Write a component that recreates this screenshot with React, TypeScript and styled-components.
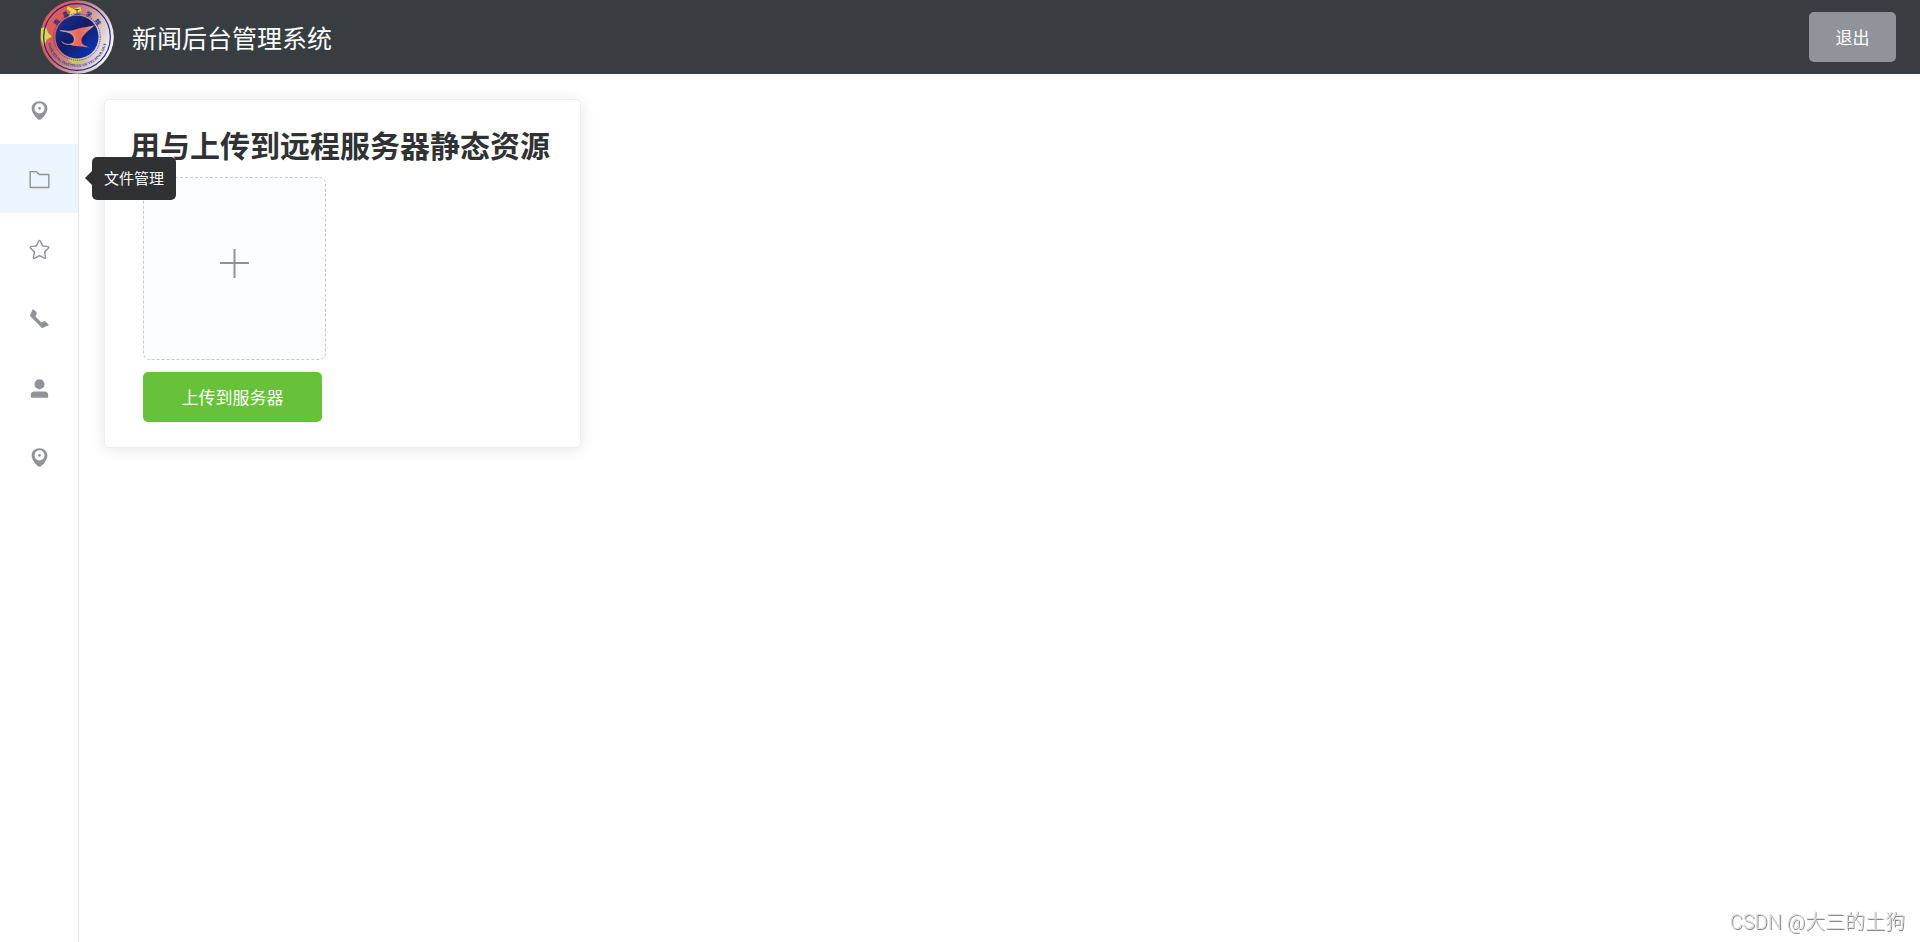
import React from "react";
import styled, { createGlobalStyle } from "styled-components";

const GlobalStyle = createGlobalStyle`
  * { box-sizing: border-box; }
  body {
    margin: 0;
    background: #fff;
    color: #303133;
    font-family: "Noto Sans CJK SC", "Microsoft YaHei", sans-serif;
  }
`;

const Page = styled.div`
  display: flex;
  flex-direction: column;
  min-height: 100vh;
`;

const Header = styled.header`
  display: flex;
  align-items: center;
  justify-content: space-between;
  height: 74px;
  padding: 0 24px 0 40px;
  background: #373d41;
`;

const Brand = styled.div`
  display: flex;
  align-items: center;
  gap: 18px;
  color: #fff;
  font-size: 25px;
  line-height: 36px;
`;

const Logo = styled.svg`
  display: block;
  width: 74px;
  height: 74px;
`;

const Button = styled.button<{ $tone: "info" | "success" }>`
  width: ${(p) => (p.$tone === "info" ? 87 : 179)}px;
  height: 50px;
  padding: 0;
  border: 0;
  border-radius: 5px;
  background: ${(p) => (p.$tone === "info" ? "#909399" : "#67c23a")};
  color: #fff;
  font-family: inherit;
  font-size: 17px;
  line-height: 24px;
  cursor: pointer;
`;

const Body = styled.div`
  display: flex;
  flex: 1;
`;

const Aside = styled.aside`
  width: 79px;
  border-right: 1px solid #e6e6e6;
`;

const Menu = styled.nav`
  display: grid;
  grid-auto-rows: 1fr;
  height: 417px;
`;

const MenuItem = styled.a<{ $active?: boolean }>`
  position: relative;
  display: flex;
  align-items: center;
  justify-content: center;
  padding: 3px 0 0 1px;
  background: ${(p) => (p.$active ? "#ecf5ff" : "transparent")};
  color: #909399;
  text-decoration: none;
`;

const Icon = styled.svg`
  width: 23px;
  height: 23px;
`;

const Tooltip = styled.span`
  position: absolute;
  z-index: 2;
  top: 13px;
  left: 92px;
  padding: 9px 12px 11px;
  border-radius: 5px;
  background: #303133;
  color: #fff;
  font-size: 15px;
  line-height: 23px;
  white-space: nowrap;

  &::before {
    content: "";
    position: absolute;
    top: 14px;
    left: -7px;
    border: 7px solid transparent;
    border-left: 0;
    border-right-color: #303133;
  }
`;

const Main = styled.main`
  flex: 1;
  padding: 25px;
`;

const Card = styled.section`
  width: fit-content;
  min-width: 477px;
  padding: 25px;
  border: 1px solid #ebeef5;
  border-radius: 5px;
  background: #fff;
  box-shadow: 0 2px 15px rgba(0, 0, 0, 0.1);
`;

const Heading = styled.h1`
  margin: 0;
  font-size: 30px;
  font-weight: 700;
  line-height: 38px;
`;

const UploadForm = styled.div`
  display: flex;
  flex-direction: column;
  align-items: flex-start;
  gap: 12px;
  padding: 14px 13px 0;
`;

const UploadBox = styled.button`
  display: flex;
  align-items: center;
  justify-content: center;
  width: 183px;
  height: 183px;
  padding: 0 0 10px;
  border: 1px dashed #c0ccda;
  border-radius: 7px;
  background: #fbfdff;
  color: #8c939d;
  cursor: pointer;
`;

const PlusIcon = styled.svg`
  width: 29px;
  height: 29px;
`;

const Watermark = styled.div`
  position: fixed;
  right: 15px;
  bottom: 6px;
  color: #dcdcdc;
  font-family: Roboto, "Noto Sans CJK SC", sans-serif;
  font-size: 20px;
  font-weight: 300;
  line-height: 28px;
  text-shadow: 1px 1px 0 #8c8c8c;
`;

const ringCharacters = ["南", "昌", "工", "学", "院"];

function School() {
  return (
    <Logo viewBox="0 0 75 75" role="img" aria-label="校徽">
      <defs>
        <linearGradient id="ring" x1="0" y1="0.3" x2="1" y2="0.7">
          <stop offset="0" stopColor="#e85a54" />
          <stop offset="0.28" stopColor="#d0605a" />
          <stop offset="0.5" stopColor="#c98a88" />
          <stop offset="0.75" stopColor="#dcc8c8" />
          <stop offset="1" stopColor="#ffffff" />
        </linearGradient>
        <linearGradient id="core" x1="0" y1="0" x2="1" y2="1">
          <stop offset="0" stopColor="#18349e" />
          <stop offset="0.45" stopColor="#131c66" />
          <stop offset="1" stopColor="#0a3cc8" />
        </linearGradient>
        <linearGradient id="bird" x1="0" y1="0" x2="1" y2="0">
          <stop offset="0" stopColor="#c9a79b" />
          <stop offset="0.55" stopColor="#ef625a" />
          <stop offset="1" stopColor="#c8a3a5" />
        </linearGradient>
        <path id="arcBottom" d="M7.500 33.500A30.300 30.300 0 1 0 67.500 33.500" />
      </defs>
      <circle cx="37.5" cy="37.5" r="37.3" fill="url(#ring)" />
      <path d="M16 8C22 3 30 1 38 1l-1 5c-7 0-13 2-18 6z" fill="#f0564f" opacity="0.7" />
      <path d="M1 29l5-2 2 6 4 4-5 3-3 7-3-7z" fill="#dcd64c" />
      <path d="M28 6l6 3 7-2 1 4-4 2 2 4-6-2-5 2 2-5-4-3z" fill="#ead84a" />
      <path d="M28 60l9-1 9 1-5 3-8 1z" fill="#c9cf4c" />
      <circle cx="37.5" cy="37.5" r="33.8" fill="none" stroke="#1a2a98" strokeWidth="1.2" />
      <circle cx="37.5" cy="37.5" r="23.6" fill="none" stroke="#3546a6" strokeWidth="1" strokeDasharray="1 1" />
      <circle cx="37.5" cy="37.5" r="21.8" fill="url(#core)" />
      <path
        d="M20 31c6 0 11 1 16-1 6-3 13-2 20-5-4 4-6 5-8 7-4 4-6 6-6 9 0 4 3 5 8 7-8-1-16-1-20-3 4-1 5-4 4-7-2-5-7-5-14-7z"
        fill="url(#bird)"
      />
      <path d="M20 31c8 1 13 2 15 7 1 4-1 7-6 7-3 0-6-1-7-3" fill="none" stroke="#c9a0a0" strokeWidth="1" />
      {ringCharacters.map((character, i) => (
        <text
          key={character}
          x="37.5"
          y="14"
          fill="#172585"
          fontSize="6"
          fontWeight="700"
          textAnchor="middle"
          transform={`rotate(${(i - 2) * 27} 37.5 37.5)`}
        >
          {character}
        </text>
      ))}
      <text fill="#2b3690" fontFamily="Liberation Serif, serif" fontSize="4" fontWeight="700" textAnchor="middle">
        <textPath href="#arcBottom" startOffset="50%">NANCHANG INSTITUTE OF TECHNOLOGY</textPath>
      </text>
    </Logo>
  );
}

const paths = {
  location:
    "M512 928c23.936 0 117.504-68.352 192.064-153.152C803.456 661.888 864 535.808 864 416c0-189.632-155.84-320-352-320S160 226.368 160 416c0 120.32 60.544 246.4 159.936 359.232C394.432 859.84 488 928 512 928zM512 640a224 224 0 1 1 0-448 224 224 0 0 1 0 448zM512 480a64 64 0 1 0 0-128 64 64 0 0 0 0 128z",
  folder:
    "M128 192v640h768V320H485.760L357.504 192H128zm-32-64h287.872l128.384 128H928a32 32 0 0 1 32 32v576a32 32 0 0 1-32 32H96a32 32 0 0 1-32-32V160a32 32 0 0 1 32-32z",
  star:
    "m512 747.840 228.160 119.936a6.400 6.400 0 0 0 9.280-6.720l-43.520-254.080 184.512-179.904a6.400 6.400 0 0 0-3.520-10.880l-255.104-37.120L517.760 147.904a6.400 6.400 0 0 0-11.520 0L392.192 379.072l-255.104 37.120a6.400 6.400 0 0 0-3.520 10.880L318.080 606.976l-43.584 254.080a6.400 6.400 0 0 0 9.280 6.720L512 747.840zM313.600 924.480a70.400 70.400 0 0 1-102.144-74.240l37.888-220.928L88.960 472.960A70.400 70.400 0 0 1 128 352.896l221.760-32.256 99.200-200.960a70.400 70.400 0 0 1 126.208 0l99.200 200.960 221.824 32.256a70.400 70.400 0 0 1 39.040 120.064L774.720 629.376l37.888 220.928a70.400 70.400 0 0 1-102.144 74.240L512 820.096l-198.400 104.320z",
  phone:
    "M199.232 125.568 90.624 379.008a32 32 0 0 0 6.784 35.200l512.384 512.384a32 32 0 0 0 35.200 6.784l253.440-108.608a32 32 0 0 0 10.048-52.032L769.600 633.920a32 32 0 0 0-36.928-5.952l-130.176 65.088-271.488-271.552 65.024-130.176a32 32 0 0 0-5.952-36.928L251.200 115.520a32 32 0 0 0-51.968 10.048z",
  user:
    "M288 320a224 224 0 1 0 448 0 224 224 0 1 0-448 0zm544 608H160a32 32 0 0 1-32-32v-96a160 160 0 0 1 160-160h448a160 160 0 0 1 160 160v96a32 32 0 0 1-32 32z",
};

const items: { icon: keyof typeof paths; label: string; active?: boolean }[] = [
  { icon: "location", label: "导航一" },
  { icon: "folder", label: "文件管理", active: true },
  { icon: "star", label: "收藏" },
  { icon: "phone", label: "电话" },
  { icon: "user", label: "用户" },
  { icon: "location", label: "导航二" },
];

export default function App() {
  return (
    <Page>
      <GlobalStyle />
      <Header>
        <Brand>
          <School />
          <span>新闻后台管理系统</span>
        </Brand>
        <Button $tone="info">退出</Button>
      </Header>
      <Body>
        <Aside>
          <Menu>
            {items.map((item, i) => (
              <MenuItem key={i} href="#" $active={item.active} aria-label={item.label}>
                <Icon viewBox="0 0 1024 1024" fill="currentColor" fillRule="evenodd" aria-hidden="true">
                  <path d={paths[item.icon]} />
                </Icon>
                {item.active && <Tooltip role="tooltip">{item.label}</Tooltip>}
              </MenuItem>
            ))}
          </Menu>
        </Aside>
        <Main>
          <Card>
            <Heading>用与上传到远程服务器静态资源</Heading>
            <UploadForm>
              <UploadBox aria-label="选择文件">
                <PlusIcon viewBox="0 0 29 29" stroke="currentColor" strokeWidth="2" aria-hidden="true">
                  <path d="M0 14h29M14.500 0v29" />
                </PlusIcon>
              </UploadBox>
              <Button $tone="success">上传到服务器</Button>
            </UploadForm>
          </Card>
        </Main>
      </Body>
      <Watermark>CSDN @大三的土狗</Watermark>
    </Page>
  );
}
